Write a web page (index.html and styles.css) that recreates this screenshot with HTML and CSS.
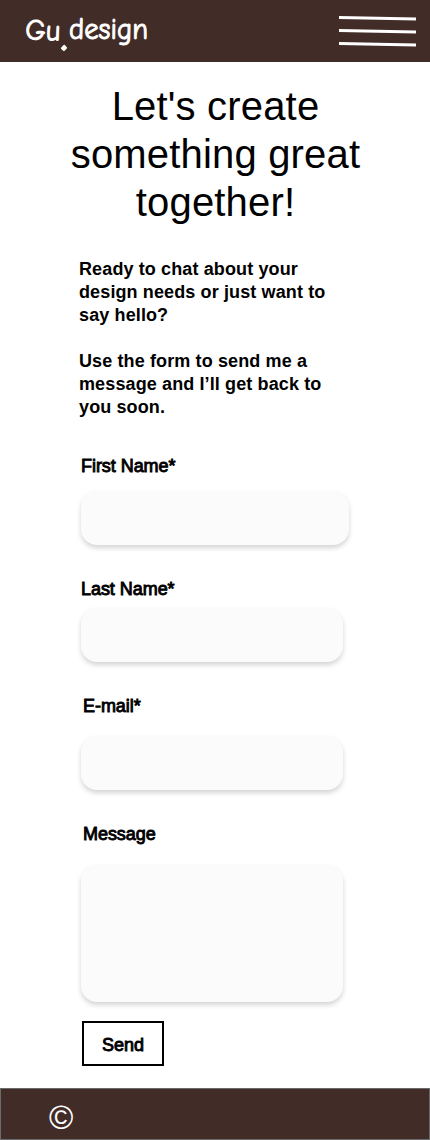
FILE: index.html
```html
<!DOCTYPE html>
<html lang="en">
<head>
  <meta charset="utf-8">
  <meta name="viewport" content="width=device-width, initial-scale=1">
  <title>Gu design</title>
  <link rel="stylesheet" href="styles.css">
</head>
<body>
  <header class="header">
    <svg class="logo" width="134" height="60" viewBox="-4 -9 134 60" aria-label="Gu design">
      <text class="logo-text" x="0" y="31" font-size="29" textLength="35" lengthAdjust="spacingAndGlyphs" transform="rotate(2 18 30)">Gu</text>
      <text class="logo-text" x="44" y="30" font-size="31" textLength="79" lengthAdjust="spacingAndGlyphs">design</text>
      <path d="M39.3 36.8l1.8 2-2.2 2.3-2-1.8z" fill="#fff" stroke="#fff" stroke-width="2" stroke-linejoin="round"/>
    </svg>
    <svg class="menu" width="77" height="32" viewBox="0 0 77 32" role="img" aria-label="Menu">
      <path d="M0 2.5L77 4M0 15.5L77 17M0 28.5L77 30" stroke="#fff" stroke-width="3"/>
    </svg>
  </header>
  <main class="main">
    <h1 class="title">Let's create<br>something great<br>together!</h1>
    <div class="intro">
      <p>Ready to chat about your<br>design needs or just want to<br>say hello?</p>
      <p>Use the form to send me a<br>message and I’ll get back to<br>you soon.</p>
    </div>
    <form class="form">
      <label class="label label-first" for="first">First Name*</label>
      <input class="field field-first" id="first" type="text">
      <label class="label label-last" for="last">Last Name*</label>
      <input class="field" id="last" type="text">
      <label class="label label-email" for="email">E-mail*</label>
      <input class="field" id="email" type="email">
      <label class="label label-message" for="message">Message</label>
      <textarea class="field field-message" id="message"></textarea>
      <button class="send" type="button">Send</button>
    </form>
  </main>
  <footer class="footer">
    <span class="copyright">©</span>
  </footer>
</body>
</html>
```
FILE: styles.css
```css
* {
  box-sizing: border-box;
}

body {
  margin: 0;
  min-height: 1140px;
  display: flex;
  flex-direction: column;
  background: #fff;
  color: #000;
  font-family: "Liberation Sans", Arial, sans-serif;
}

.header {
  height: 62px;
  display: flex;
  justify-content: space-between;
  padding: 0 14px 0 21px;
  background: #422c28;
}

.logo-text {
  fill: #fff;
  stroke: #fff;
  stroke-width: 1px;
  stroke-linejoin: round;
  font-family: "Comic Neue", "Comic Sans MS", Lato, sans-serif;
}

.menu {
  margin-top: 15px;
}

.main {
  flex: 1;
  padding-top: 20px;
}

.title {
  margin: 0;
  padding-left: 1px;
  font-size: 40px;
  font-weight: 400;
  line-height: 48px;
  letter-spacing: 0.18px;
  text-align: center;
}

.intro {
  margin: 32px 0 0 79px;
  font-size: 18px;
  font-weight: 700;
  line-height: 23px;
  letter-spacing: 0.12px;
}

.intro p {
  margin: 0 0 23px;
}

.form {
  display: flex;
  flex-direction: column;
  align-items: flex-start;
  margin: 36px 0 0 81px;
}

.label {
  height: 22px;
  font-size: 18px;
  line-height: 22px;
  letter-spacing: -0.05px;
  -webkit-text-stroke: 0.9px #000;
}

.label-first {
  margin-bottom: 14px;
}

.label-last {
  margin: 33px 0 8px;
}

.label-email {
  margin: 33px 0 19px 2px;
}

.label-message {
  margin: 33px 0 20px 2px;
}

.field {
  width: 262px;
  height: 54px;
  padding: 0 16px;
  border: 0;
  border-radius: 16px;
  outline: 0;
  resize: none;
  background: #fbfbfb;
  box-shadow: 0 3px 5px rgba(0, 0, 0, 0.17);
  font: 18px "Liberation Sans", Arial, sans-serif;
}

.field-first {
  width: 268px;
}

.field-message {
  height: 137px;
}

.send {
  width: 82px;
  height: 45px;
  margin: 19px 0 0 1px;
  padding: 3px 0 0;
  border: 2px solid #000;
  background: #fff;
  color: #000;
  font: 18px "Liberation Sans", Arial, sans-serif;
  -webkit-text-stroke: 0.9px #000;
}

.footer {
  height: 52px;
  padding: 10px 0 0 48px;
  border: 1px solid #6b6b6b;
  background: #422c28;
}

.copyright {
  display: block;
  color: #fff;
  font-size: 33px;
  line-height: 38px;
}
```
